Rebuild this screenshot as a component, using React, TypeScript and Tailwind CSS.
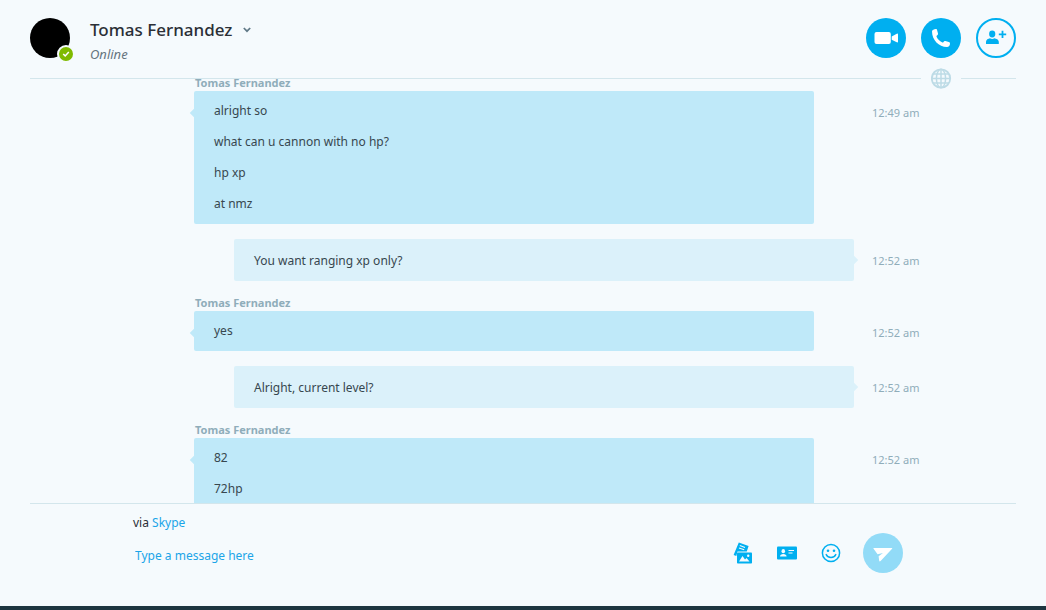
import React from "react";

type Message = { from: "them" | "me"; time: string; lines: string[] };

const contact = "Tomas Fernandez";

const messages: Message[] = [
  { from: "them", time: "12:49 am", lines: ["alright so", "what can u cannon with no hp?", "hp xp", "at nmz"] },
  { from: "me", time: "12:52 am", lines: ["You want ranging xp only?"] },
  { from: "them", time: "12:52 am", lines: ["yes"] },
  { from: "me", time: "12:52 am", lines: ["Alright, current level?"] },
  { from: "them", time: "12:52 am", lines: ["82", "72hp"] },
];

function VideoIcon() {
  return (
    <svg viewBox="0 0 24 24" className="size-6" fill="currentColor" aria-hidden="true">
      <rect x="0.500" y="6" width="16.300" height="12" rx="2" />
      <path d="M17.700 10.400 22.800 7.700Q24 7.300 24 8.300V15.700Q24 16.700 22.800 16.300L17.700 13.800Z" />
    </svg>
  );
}

function PhoneIcon() {
  return (
    <svg viewBox="0 0 24 24" className="size-6" fill="currentColor" aria-hidden="true">
      <path d="M3 5.200C3.400 4 5 3 6.800 3C7.600 3 8 3.500 8.200 4.400L9 7.600C9.200 8.500 8.800 9 8 9.500C7.400 9.900 7.400 10.300 7.700 11C8.800 13.300 10.600 15.200 13 16.300C13.700 16.600 14.100 16.600 14.500 16C15 15.200 15.500 14.900 16.400 15.100L19.800 15.900C20.700 16.100 21 16.600 21 17.400C21 19.600 19.800 20.900 18 20.900C9.800 20.900 3 14 3 5.200Z" />
    </svg>
  );
}

function AddPersonIcon() {
  return (
    <svg viewBox="0 0 24 24" className="size-6" fill="currentColor" aria-hidden="true">
      <ellipse cx="8.200" cy="8" rx="3.100" ry="3.400" />
      <path d="M2 18V15.800C2 13.600 4.200 12.600 6 12.200C7.200 13.200 9.200 13.200 10.400 12.200C12.400 12.600 14.800 13.600 14.800 15.800V18Z" />
      <path d="M17.600 4.800h1.800v2.800h2.800v1.600h-2.800v2.800h-1.800V9.200h-2.800V7.600h2.800Z" />
    </svg>
  );
}

function GlobeIcon() {
  return (
    <svg viewBox="0 0 21 21" className="size-[21px]" fill="none" stroke="currentColor" strokeWidth="1.500" aria-hidden="true">
      <circle cx="10" cy="10.500" r="9.200" strokeWidth="1.800" />
      <ellipse cx="10" cy="10.500" rx="4.600" ry="9.200" />
      <path d="M10 1v19M1 10.500h18M2 6h16M2 15h16" />
    </svg>
  );
}

function FilesIcon() {
  return (
    <svg viewBox="0 0 20 22" className="h-[22px] w-5" aria-hidden="true">
      <path d="M5.800 0.500 15.600 4 13.800 9.500H4.500L3.300 14 0.600 13Z" fill="#00aff0" />
      <path d="M6.800 3.600 12 5.400M6 6 11.200 7.800" stroke="#f5fafd" strokeWidth="1.100" />
      <rect x="4" y="10.500" width="15" height="11" rx="0.800" fill="#00aff0" />
      <path d="M6 19.500 9.500 14 12 17.400 13.500 16 16.500 19.500Z" fill="#f5fafd" />
      <circle cx="15.200" cy="13.800" r="1.200" fill="#f5fafd" />
    </svg>
  );
}

function ContactCardIcon() {
  return (
    <svg viewBox="0 0 20 14" className="h-3.5 w-5" aria-hidden="true">
      <rect y="0.500" width="20" height="13" rx="1" fill="#00aff0" />
      <ellipse cx="6.300" cy="5.200" rx="1.800" ry="2.100" fill="#f5fafd" />
      <path d="M3 10.500C3 8.700 4.400 8.100 6.300 7.900C8.200 8.100 9.600 8.700 9.600 10.500Z" fill="#f5fafd" />
      <path d="M11.500 4.500h5.500M11.500 7h4" stroke="#f5fafd" strokeWidth="1.200" />
    </svg>
  );
}

function SmileIcon() {
  return (
    <svg viewBox="0 0 20 20" className="size-5" aria-hidden="true">
      <circle cx="10" cy="10" r="8.600" fill="none" stroke="#00aff0" strokeWidth="1.500" />
      <circle cx="7" cy="7.800" r="1.300" fill="#00aff0" />
      <circle cx="13" cy="7.800" r="1.300" fill="#00aff0" />
      <path d="M5.200 11.600C6.600 15.400 13.400 15.400 14.800 11.600" fill="none" stroke="#00aff0" strokeWidth="1.500" strokeLinecap="round" />
    </svg>
  );
}

function SendIcon() {
  return (
    <svg viewBox="0 0 20 20" className="size-5" fill="#fff" aria-hidden="true">
      <path d="M0.400 5.600Q0 4.900 0.900 4.900H18.800Q19.700 4.900 19.100 5.700L7.600 18Q6.500 18.900 6.200 17.700L5.600 13.200 10 10 4.600 11.300Z" />
    </svg>
  );
}

function MessageRow({ message }: { message: Message }) {
  const mine = message.from === "me";
  return (
    <li className="grid grid-cols-[minmax(0,1fr)_660px_minmax(0,1fr)] pl-0.5">
      <div className="col-start-2">
        {!mine && <h2 className="pb-0.5 pl-px text-[11px] leading-[13px] font-bold text-[#8fadba]">{contact}</h2>}
      </div>
      <div
        className={
          mine
            ? "relative col-start-2 ml-10 rounded-xs bg-[#dbf1fa] px-5 pt-3 pb-2.5"
            : "relative col-start-2 mr-10 flex flex-col gap-[11px] rounded-xs bg-[#bfe9f9] px-5 py-2.5"
        }
      >
        <span
          className={
            mine
              ? "absolute top-[18px] -right-[3px] size-1.5 rotate-45 bg-[#dbf1fa]"
              : "absolute top-[19px] -left-[3px] size-1.5 rotate-45 bg-[#bfe9f9]"
          }
        />
        {message.lines.map((line) => (
          <p key={line} className="text-xs leading-5 text-[#37474f]">{line}</p>
        ))}
      </div>
      <time className="col-start-3 pt-3 pl-[18px] text-[11px] leading-5 whitespace-nowrap text-[#8fadba]">{message.time}</time>
    </li>
  );
}

export default function App() {
  return (
    <div className="flex h-screen flex-col border-b-4 border-[#1d3540] bg-[#f5fafd] font-['Noto_Sans',sans-serif]">
      <header className="flex h-[78px] shrink-0 items-start justify-between px-[30px] pt-[18px]">
        <div className="flex">
          <div className="relative size-10 rounded-full bg-black">
            <span className="absolute -right-[5px] -bottom-[5px] flex size-[18px] items-center justify-center rounded-full border-2 border-[#f5fafd] bg-[#7fba00]">
              <svg viewBox="0 0 8 8" className="size-2" fill="none" stroke="#fff" strokeWidth="1.500" aria-hidden="true">
                <path d="M1.200 4 3.200 5.900 6.800 2" />
              </svg>
            </span>
          </div>
          <div className="pl-5">
            <button type="button" className="flex items-center gap-[11px] text-[17px] leading-6 font-medium text-[#2b2f36]">
              {contact}
              <svg viewBox="0 0 8 6" className="h-1.5 w-2" fill="none" stroke="#5f7886" strokeWidth="1.700" aria-hidden="true">
                <path d="M0.800 1 4 4.200 7.200 1" />
              </svg>
            </button>
            <p className="text-[13px] leading-6 text-[#66757f] italic">Online</p>
          </div>
        </div>
        <div className="flex gap-[15px]">
          <button type="button" aria-label="Video call" className="flex size-10 items-center justify-center rounded-full bg-[#00aff0] text-white"><VideoIcon /></button>
          <button type="button" aria-label="Call" className="flex size-10 items-center justify-center rounded-full bg-[#00aff0] text-white"><PhoneIcon /></button>
          <button type="button" aria-label="Add people" className="flex size-10 items-center justify-center rounded-full border-2 border-[#00aff0] text-[#00aff0]"><AddPersonIcon /></button>
        </div>
      </header>
      <div className="z-10 flex h-px shrink-0 items-center px-[30px]">
        <span className="h-px flex-1 bg-[#d3e6ec]" />
        <span className="flex w-10 justify-center text-[#bddbe6]"><GlobeIcon /></span>
        <span className="h-px w-[55px] bg-[#d3e6ec]" />
      </div>
      <main className="min-h-0 flex-1 overflow-hidden">
        <ol className="-mt-[3px] flex flex-col gap-[15px]">
          {messages.map((message, index) => (
            <MessageRow key={index} message={message} />
          ))}
        </ol>
      </main>
      <footer className="shrink-0 px-[30px]">
        <div className="h-[103px] border-t border-[#d3e6ec] pt-[9px] pr-[113px] pl-[103px]">
          <p className="text-xs leading-5 text-[#2b2f36]">
            via <a href="#skype" className="text-[#1ba5e8]">Skype</a>
          </p>
          <form className="flex items-center">
            <input
              type="text"
              aria-label="Message"
              placeholder="Type a message here"
              className="mt-1.5 min-w-0 flex-1 bg-transparent pl-0.5 text-xs leading-5 outline-none placeholder:text-[#1ba5e8]"
            />
            <div className="flex items-center gap-6 pr-[22px]">
              <button type="button" aria-label="Send files"><FilesIcon /></button>
              <button type="button" aria-label="Send contacts"><ContactCardIcon /></button>
              <button type="button" aria-label="Emoticons"><SmileIcon /></button>
            </div>
            <button type="submit" aria-label="Send" className="flex size-10 items-center justify-center rounded-full bg-[#92dbf7]"><SendIcon /></button>
          </form>
        </div>
      </footer>
    </div>
  );
}
